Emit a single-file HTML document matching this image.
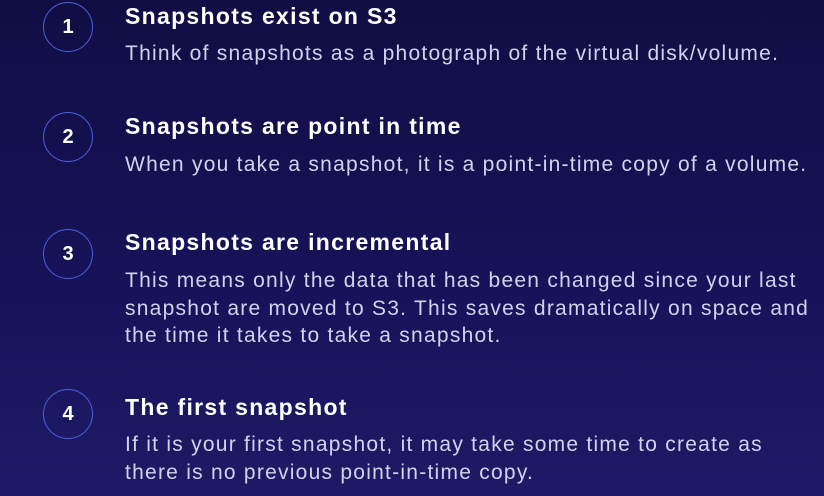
<!DOCTYPE html>
<html><head><style>
html,body{margin:0;padding:0}
body{width:824px;height:496px;overflow:hidden;position:relative;background:linear-gradient(180deg,#110e44 0%,#16135a 60%,#1e1b66 100%);font-family:"Liberation Sans",sans-serif}
.c{position:absolute;left:43px;width:50px;height:50px;border:1.5px solid #4d5fe0;border-radius:50%;box-sizing:border-box;color:#fff;font-weight:bold;font-size:20px;display:flex;align-items:center;justify-content:center}
.t{position:absolute;left:125px;color:#fff;font-weight:bold;font-size:23px;letter-spacing:1.3px;line-height:26px;white-space:nowrap}
.b{position:absolute;left:125px;color:#d2d2ec;font-size:21px;letter-spacing:1.25px;line-height:27.5px;white-space:nowrap}
</style></head><body>
<div class="c" style="top:2px">1</div>
<div class="t" style="top:3px">Snapshots exist on S3</div>
<div class="b" style="top:40px">Think of snapshots as a photograph of the virtual disk/volume.</div>
<div class="c" style="top:112px">2</div>
<div class="t" style="top:113px">Snapshots are point in time</div>
<div class="b" style="top:151px">When you take a snapshot, it is a point-in-time copy of a volume.</div>
<div class="c" style="top:229px">3</div>
<div class="t" style="top:229px">Snapshots are incremental</div>
<div class="b" style="top:267px">This means only the data that has been changed since your last<br>snapshot are moved to S3. This saves dramatically on space and<br>the time it takes to take a snapshot.</div>
<div class="c" style="top:389px">4</div>
<div class="t" style="top:394px">The first snapshot</div>
<div class="b" style="top:431px">If it is your first snapshot, it may take some time to create as<br>there is no previous point-in-time copy.</div>
</body></html>
